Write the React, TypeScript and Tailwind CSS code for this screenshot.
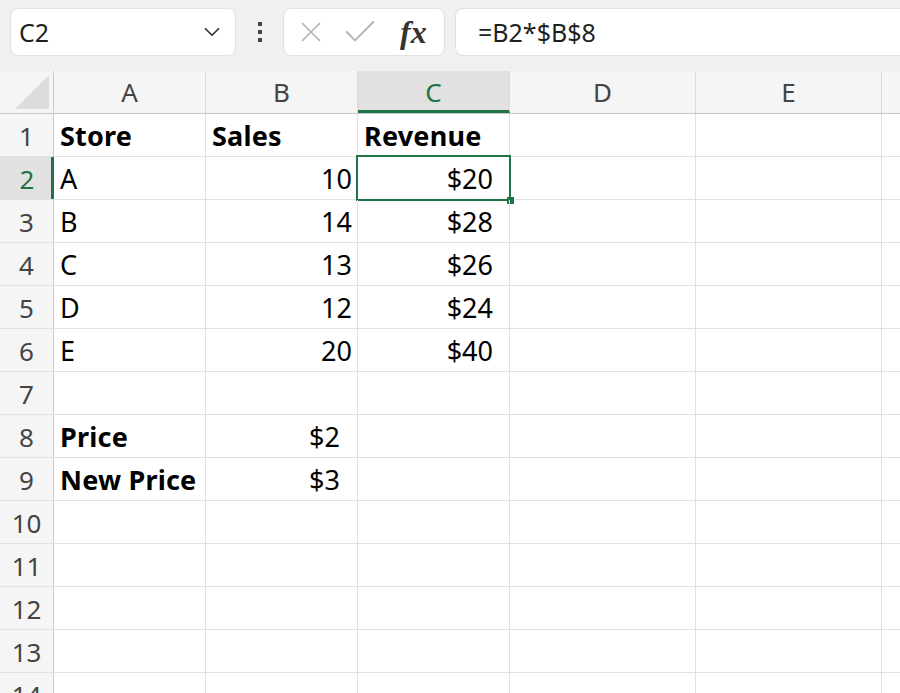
import { ChevronDown, X, Check } from "lucide-react";

const cols = [
  { key: "A", w: "w-[152px]" },
  { key: "B", w: "w-[152px]" },
  { key: "C", w: "w-[152px]" },
  { key: "D", w: "w-[186px]" },
  { key: "E", w: "w-[186px]" },
  { key: "F", w: "w-[60px]" },
];

type Cell = { v: string; bold?: boolean; right?: boolean; pad?: string };

const data: Record<number, Record<string, Cell>> = {
  1: {
    A: { v: "Store", bold: true },
    B: { v: "Sales", bold: true },
    C: { v: "Revenue", bold: true },
  },
  2: { A: { v: "A" }, B: { v: "10", right: true }, C: { v: "$20", right: true, pad: "pr-[16px]" } },
  3: { A: { v: "B" }, B: { v: "14", right: true }, C: { v: "$28", right: true, pad: "pr-[16px]" } },
  4: { A: { v: "C" }, B: { v: "13", right: true }, C: { v: "$26", right: true, pad: "pr-[16px]" } },
  5: { A: { v: "D" }, B: { v: "12", right: true }, C: { v: "$24", right: true, pad: "pr-[16px]" } },
  6: { A: { v: "E" }, B: { v: "20", right: true }, C: { v: "$40", right: true, pad: "pr-[16px]" } },
  8: { A: { v: "Price", bold: true }, B: { v: "$2", right: true, pad: "pr-[17px]" } },
  9: { A: { v: "New Price", bold: true }, B: { v: "$3", right: true, pad: "pr-[17px]" } },
};

const rows = [1, 2, 3, 4, 5, 6, 7, 8, 9, 10, 11, 12, 13, 14];

export default function App() {
  return (
    <div
      className="w-[900px] h-[693px] overflow-hidden bg-white"
      style={{ fontFamily: '"Noto Sans", "Open Sans", sans-serif' }}
    >
      {/* Barra de fórmulas */}
      <div className="h-[71px] bg-[#f2f0ee] flex items-start pt-[8px] pl-[10px]">
        <div className="w-[226px] h-[48px] bg-white rounded-[8px] border border-[#e3e1df] flex items-center pl-[8px] pr-[10px]">
          <span className="text-[25px] text-[#1f1f1f] flex-1 pt-[1px]">C2</span>
          <ChevronDown size={26} strokeWidth={1.6} className="text-[#333]" />
        </div>
        <div className="w-[47px] h-[48px] flex flex-col items-center justify-center gap-[4px]">
          <span className="w-[4px] h-[4px] bg-[#444]" />
          <span className="w-[4px] h-[4px] bg-[#444]" />
          <span className="w-[4px] h-[4px] bg-[#444]" />
        </div>
        <div className="w-[162px] h-[48px] bg-white rounded-[8px] border border-[#e3e1df] flex items-center pl-[10px]">
          <X size={34} strokeWidth={1.2} className="text-[#b4b4b4]" />
          <Check size={40} strokeWidth={1.2} className="text-[#b4b4b4] ml-[12px]" />
          <span
            className="ml-[20px] text-[32px] italic font-bold text-[#333] leading-none"
            style={{ fontFamily: '"Liberation Serif", "DejaVu Serif", serif' }}
          >
            fx
          </span>
        </div>
        <div className="ml-[10px] flex-1 h-[48px] bg-white rounded-l-[8px] border border-r-0 border-[#e3e1df] flex items-center pl-[22px]">
          <span className="text-[25px] text-[#1f1f1f] pt-[1px]">=B2*$B$8</span>
        </div>
      </div>

      {/* Encabezado de columnas */}
      <div className="flex h-[43px] bg-[#f5f5f5] border-b border-[#c8c8c8]">
        <div className="w-[54px] shrink-0 relative border-r border-[#c8c8c8]">
          <div className="absolute right-[4px] bottom-[4px] w-0 h-0 border-l-[34px] border-l-transparent border-b-[34px] border-b-[#dcdcdc]" />
        </div>
        {cols.map((c) => (
          <div
            key={c.key}
            className={`${c.w} shrink-0 flex items-center justify-center border-r border-[#dadada] text-[26px] ${
              c.key === "C"
                ? "bg-[#e1e1e1] text-[#217346] border-b-[3px] border-b-[#217346] pt-[3px]"
                : "text-[#444]"
            }`}
          >
            {c.key === "F" ? "" : c.key}
          </div>
        ))}
      </div>

      {/* Filas */}
      {rows.map((r) => (
        <div key={r} className="flex h-[43px] border-b border-[#e1e1e1]">
          <div
            className={`w-[54px] shrink-0 flex items-center justify-center text-[26px] pt-[3px] ${
              r === 2
                ? "bg-[#e1e1e1] text-[#217346] border-r-[3px] border-[#217346] pl-[3px]"
                : "bg-[#f5f5f5] text-[#444] border-r border-[#c8c8c8]"
            }`}
          >
            {r}
          </div>
          {cols.map((c) => {
            const cell = data[r]?.[c.key];
            const selected = r === 2 && c.key === "C";
            return (
              <div
                key={c.key}
                className={`${c.w} shrink-0 relative flex items-center pt-[3px] border-r border-[#e1e1e1] text-[27px] text-black ${
                  cell?.right ? `justify-end ${cell.pad ?? "pr-[5px]"}` : "pl-[6px]"
                } ${cell?.bold ? "font-bold tracking-[0.2px]" : ""}`}
              >
                {cell?.v}
                {selected && (
                  <>
                    <div className="absolute left-[-2px] top-[-2px] right-[-2px] bottom-[-2px] border-[2px] border-[#217346]" />
                    <div className="absolute right-[-5px] bottom-[-5px] w-[7px] h-[7px] bg-[#217346]" />
                  </>
                )}
              </div>
            );
          })}
        </div>
      ))}
    </div>
  );
}
